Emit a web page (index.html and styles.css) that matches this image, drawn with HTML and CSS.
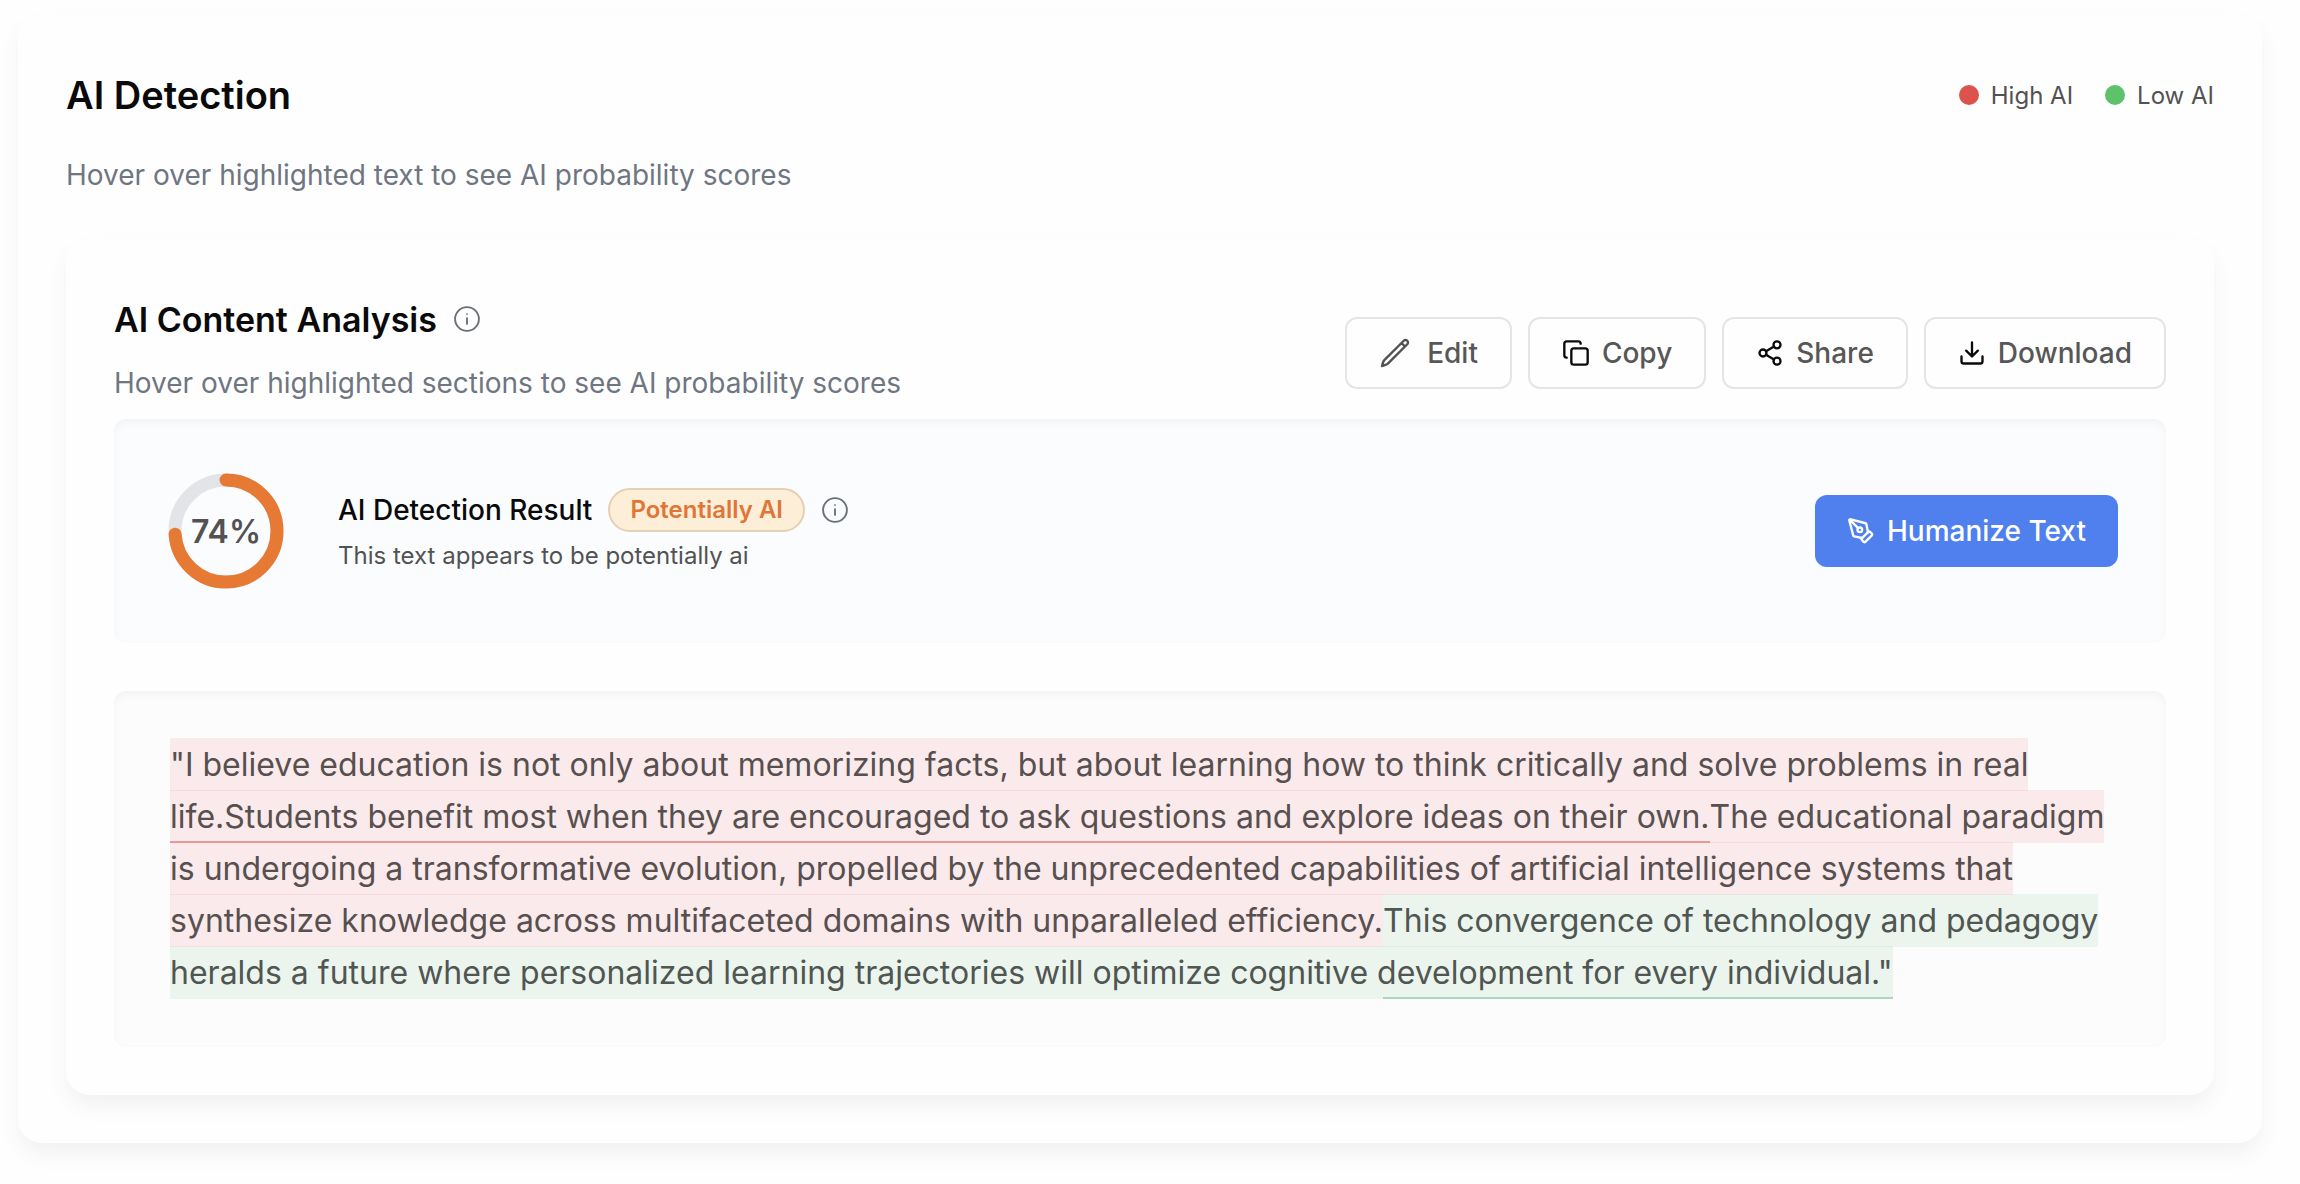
FILE: index.html
```html
<!DOCTYPE html>
<html lang="en">

<head>
    <meta charset="UTF-8">
    <meta name="viewport" content="width=device-width, initial-scale=1.0">
    <title>AI Detection</title>
    <link rel="stylesheet" href="styles.css">
</head>

<body>
    <main class="card">
        <header class="page-header">
            <h1>AI Detection</h1>
            <ul class="legend">
                <li><span class="dot dot-high"></span>High AI</li>
                <li><span class="dot dot-low"></span>Low AI</li>
            </ul>
        </header>
        <p class="page-hint">Hover over highlighted text to see AI probability scores</p>

        <section class="card">
            <div class="analysis-header">
                <div class="analysis-title">
                    <div class="title-row">
                        <h2>AI Content Analysis</h2>
                        <button class="info-button" aria-label="About the analysis">
                            <svg viewBox="0 0 24 24"><circle cx="12" cy="12" r="10.2" /><path d="M12 16.2v-4.8M12 7.8h.01" /></svg>
                        </button>
                    </div>
                    <p>Hover over highlighted sections to see AI probability scores</p>
                </div>
                <div class="actions">
                    <button class="btn btn-edit">
                        <svg class="icon" viewBox="0 0 24 24"><path d="m16.862 4.487 1.687-1.688a1.875 1.875 0 1 1 2.652 2.652L6.832 19.82a4.5 4.5 0 0 1-1.897 1.13l-2.685.8.8-2.685a4.5 4.5 0 0 1 1.13-1.897L16.863 4.487Zm0 0L19.5 7.125" /></svg>
                        <span>Edit</span>
                    </button>
                    <button class="btn">
                        <svg class="icon" viewBox="0 0 24 24"><rect x="8" y="8" width="14" height="14" rx="2" /><path d="M4 16c-1.1 0-2-.9-2-2V4c0-1.1.9-2 2-2h10c1.1 0 2 .9 2 2" /></svg>
                        <span>Copy</span>
                    </button>
                    <button class="btn">
                        <svg class="icon" viewBox="0 0 24 24"><circle cx="18" cy="5" r="3" /><circle cx="6" cy="12" r="3" /><circle cx="18" cy="19" r="3" /><path d="m8.59 13.51 6.83 3.98M15.41 6.51l-6.82 3.98" /></svg>
                        <span>Share</span>
                    </button>
                    <button class="btn">
                        <svg class="icon" viewBox="0 0 24 24"><path d="M21 15v4a2 2 0 0 1-2 2H5a2 2 0 0 1-2-2v-4M7 10l5 5 5-5M12 15V3" /></svg>
                        <span>Download</span>
                    </button>
                </div>
            </div>

            <div class="panel result">
                <div class="score">
                    <svg viewBox="0 0 128 128">
                        <circle class="score-track" cx="64" cy="64" r="51" />
                        <circle class="score-value" cx="64" cy="64" r="51" pathLength="100" stroke-dasharray="74 100" />
                    </svg>
                    <span>74%</span>
                </div>
                <div class="result-text">
                    <div class="result-row">
                        <h3>AI Detection Result</h3>
                        <span class="badge">Potentially AI</span>
                        <button class="info-button" aria-label="About the result">
                            <svg viewBox="0 0 24 24"><circle cx="12" cy="12" r="10.2" /><path d="M12 16.2v-4.8M12 7.8h.01" /></svg>
                        </button>
                    </div>
                    <p>This text appears to be potentially ai</p>
                </div>
                <button class="btn btn-primary">
                    <svg class="icon" viewBox="0 0 24 24"><path d="M15.707 21.293a1 1 0 0 1-1.414 0l-1.586-1.586a1 1 0 0 1 0-1.414l5.586-5.586a1 1 0 0 1 1.414 0l1.586 1.586a1 1 0 0 1 0 1.414z" /><path d="m18 13-1.375-6.874a1 1 0 0 0-.746-.776L3.235 2.028a1 1 0 0 0-1.207 1.207L5.35 15.879a1 1 0 0 0 .776.746L13 18" /><path d="m2.3 2.3 7.286 7.286" /><circle cx="11" cy="11" r="2" /></svg>
                    <span>Humanize Text</span>
                </button>
            </div>

            <p class="panel content"><span class="mark mark-high">"I believe education is not only about memorizing facts, but about learning how to think critically and solve problems in real life.Students benefit most when they are encouraged to ask questions and explore ideas on their own.</span><span class="mark mark-high">The educational paradigm is undergoing a transformative evolution, propelled by the unprecedented capabilities of artificial intelligence systems that synthesize knowledge across multifaceted domains with unparalleled efficiency.</span><span class="mark mark-low">This convergence of technology and pedagogy heralds a future where personalized learning trajectories will optimize cognitive development for every individual."</span></p>
        </section>
    </main>
</body>

</html>
```
FILE: styles.css
```css
* {
    box-sizing: border-box;
}

body {
    margin: 0;
    padding: 15px 38px 40px 18px;
    font-family: Inter, "Liberation Sans", sans-serif;
    font-size: 28px;
    color: #525252;
    background-color: #fefefe;
}

h1,
h2,
h3,
p,
ul {
    margin: 0;
    padding: 0;
}

button {
    font: inherit;
    color: inherit;
    cursor: pointer;
}

svg {
    display: block;
    fill: none;
    stroke: currentColor;
    stroke-width: 2;
    stroke-linecap: round;
    stroke-linejoin: round;
}

.card {
    padding: 48px;
    border-radius: 24px;
    background-color: #fefefe;
    box-shadow: 0 12px 24px -2px rgba(0, 0, 0, 0.06);
}

/* Page header */
.page-header {
    display: flex;
    justify-content: space-between;
    align-items: center;
    height: 64px;
}

h1,
h2 {
    font-weight: 600;
    color: #0a0a0a;
}

h1 {
    font-size: 38px;
}

h2 {
    font-size: 34px;
}

.legend {
    display: flex;
    gap: 32px;
    list-style: none;
    font-size: 24px;
}

.legend li {
    display: flex;
    align-items: center;
    gap: 12px;
}

.dot {
    width: 20px;
    height: 20px;
    border-radius: 50%;
}

.dot-high {
    background-color: #dc524c;
}

.dot-low {
    background-color: #5dc269;
}

.page-hint {
    margin: 28px 0 44px;
    line-height: 40px;
    color: #6f7682;
}

/* Analysis card */
.analysis-header {
    display: flex;
    justify-content: space-between;
    align-items: center;
    padding-bottom: 16px;
}

.analysis-header .actions {
    margin-bottom: -16px;
}

.analysis-title p {
    margin-top: 12px;
    line-height: 40px;
    color: #6f7682;
}

.title-row {
    display: flex;
    align-items: center;
    gap: 16px;
    height: 64px;
}

.info-button {
    padding: 0;
    border: none;
    background: none;
    color: #6b7078;
}

.info-button svg {
    width: 28px;
    height: 28px;
    stroke-width: 1.6;
}

.actions {
    display: flex;
    gap: 16px;
}

.btn {
    display: flex;
    align-items: center;
    gap: 12px;
    height: 72px;
    padding: 0 32px;
    border: 2px solid #e5e5e5;
    border-radius: 12px;
    background-color: #fefefe;
    font-weight: 500;
    color: #575757;
}

.icon {
    width: 28px;
    height: 28px;
    color: #0a0a0a;
}

.btn-edit {
    gap: 16px;
}

.btn-edit .icon {
    width: 32px;
    height: 32px;
    color: #525252;
    stroke-width: 1.8;
}

.btn-primary {
    border: none;
    background-color: #4f80ee;
    color: #ffffff;
}

.btn-primary .icon {
    color: #ffffff;
}

.panel {
    border-radius: 12px;
    box-shadow: inset 0 4px 8px rgba(0, 0, 0, 0.04);
}

/* Detection result */
.result {
    display: flex;
    align-items: center;
    gap: 48px;
    padding: 48px;
    background-color: #fafcfe;
}

.score {
    display: grid;
    place-items: center;
    width: 128px;
    height: 128px;
}

.score svg,
.score span {
    grid-area: 1 / 1;
}

.score svg {
    width: 100%;
    transform: rotate(-90deg);
}

.score circle {
    stroke-width: 13;
}

.score-track {
    stroke: #e3e4e7;
}

.score-value {
    stroke: #e67a35;
}

.score span {
    font-size: 32px;
    font-weight: 600;
}

.result-text {
    flex: 1;
}

.result-row {
    display: flex;
    align-items: center;
    gap: 16px;
}

.result-row h3 {
    font-size: 28px;
    font-weight: 500;
    color: #0a0a0a;
}

.result-text p {
    margin-top: 6px;
    font-size: 24px;
    line-height: 36px;
}

.badge {
    padding: 0 20px;
    border: 2px solid #e6d0b2;
    border-radius: 22px;
    background-color: #fdeed8;
    font-size: 24px;
    font-weight: 600;
    line-height: 40px;
    color: #df7637;
}

/* Analysed text */
.content {
    margin-top: 48px;
    padding: 48px 56px;
    background-color: #fcfcfc;
    font-size: 32px;
    line-height: 52px;
}

.mark {
    position: relative;
    padding: 7px 0;
    color: #57504f;
}

/* score line under the sentence */
.mark::after {
    content: "";
    position: absolute;
    left: 0;
    bottom: 0;
    width: 100%;
    height: 2px;
}

.mark-high {
    background-color: rgba(235, 60, 75, 0.09);
}

.mark-high::after {
    background-color: rgba(220, 60, 60, 0.45);
}

.mark-low {
    background-color: rgba(34, 160, 80, 0.08);
    color: #505652;
}

.mark-low::after {
    background-color: rgba(34, 140, 80, 0.3);
}
```
